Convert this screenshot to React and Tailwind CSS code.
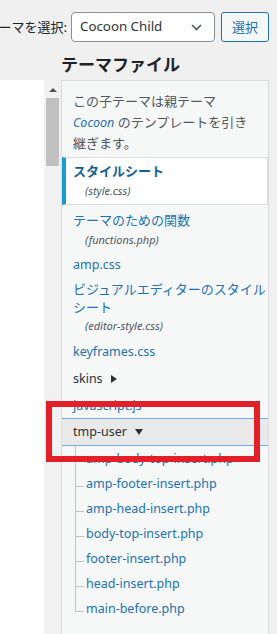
import React from "react";

const LINK = "text-[#2271b1]";

function TreeItem({ name, last }) {
  return (
    <div className="flex h-[25px]">
      <div className="w-[13px] shrink-0" />
      <div className={last ? "w-[9px] shrink-0" : "w-[9px] shrink-0 border-l border-[#c3c4c7]"}>
        <div className={last ? "h-[16px] border-l border-b border-[#c3c4c7]" : "h-[16px] border-b border-[#c3c4c7]"} />
      </div>
      <span className={"pl-[2px] text-[12.5px] leading-[25px] whitespace-nowrap " + LINK}>{name}</span>
    </div>
  );
}

export default function App() {
  const tree = [
    "amp-body-top-insert.php",
    "amp-footer-insert.php",
    "amp-head-insert.php",
    "body-top-insert.php",
    "footer-insert.php",
    "head-insert.php",
    "main-before.php",
  ];
  return (
    <div className="relative w-[277px] h-[634px] overflow-hidden bg-[#f0f0f1] text-[13px] text-[#1d2327] font-['Noto_Sans','Noto_Sans_CJK_JP',sans-serif]">
      {/* top row */}
      <div className="flex justify-end items-center pt-[12px] pr-[8px] whitespace-nowrap">
        <span className="text-[13px] leading-[30px] mr-[4px] font-['Noto_Sans_CJK_JP',sans-serif]">テーマを選択:</span>
        <div className="w-[144px] h-[30px] shrink-0 flex items-center justify-between bg-white border border-[#8c8f94] rounded-[4px] pl-[8px] pr-[12px] text-[13.3px] text-[#2c3338]">
          <span>Cocoon Child</span>
          <svg width="11" height="7" viewBox="0 0 11 7" fill="none">
            <path d="M1 1l4.5 4.5L10 1" stroke="#50575e" strokeWidth="1.6" />
          </svg>
        </div>
        <button className="ml-[6px] w-[48px] h-[30px] shrink-0 border border-[#2271b1] rounded-[3px] bg-[#f6f7f7] text-[#2271b1] text-[13px] font-['Noto_Sans_CJK_JP',sans-serif]">
          選択
        </button>
      </div>

      {/* heading */}
      <h2 className="mt-[11px] pl-[61px] h-[22px] leading-[22px] text-[17px] font-bold text-[#1d2327] font-['Noto_Sans_CJK_JP',sans-serif]">
        テーマファイル
      </h2>

      {/* main */}
      <div className="mt-[5px] flex h-[560px]">
        <div className="w-[61px] shrink-0 bg-white flex justify-end">
          <div className="w-[17px] bg-[#f1f1f1] flex flex-col items-center">
            <div className="h-[18px] w-full flex items-center justify-center pt-[1px]">
              <div className="w-0 h-0 border-l-[4px] border-r-[4px] border-b-[4px] border-l-transparent border-r-transparent border-b-[#505050]" />
            </div>
            <div className="w-[13px] h-[68px] bg-[#c1c1c1]" />
          </div>
        </div>

        <div className="w-[208px] shrink-0 border border-[#dcdcde] bg-[#f6f7f7]">
          <p className="pt-[10px] px-[11px] leading-[21px] text-[#50575e] whitespace-nowrap">
            この子テーマは親テーマ
            <br />
            <i className={"text-[12.5px] " + LINK}>Cocoon</i> のテンプレートを引き
            <br />
            継ぎます。
          </p>

          {/* selected */}
          <div className="mt-[3px] bg-white border-y border-r border-[#dcdcde] border-l-[4px] border-l-[#1a9ccd] pt-[3px] pb-[4px] pl-[7px]">
            <div className="h-[20px] leading-[20px] font-bold text-[#135e96] whitespace-nowrap">スタイルシート</div>
            <div className="h-[19px] leading-[19px] pl-[12px] italic text-[11px] text-[#50575e]">(style.css)</div>
          </div>

          <div className="pl-[11px]">
            <div className={"mt-[5px] h-[20px] leading-[20px] whitespace-nowrap " + LINK}>テーマのための関数</div>
            <div className="h-[20px] leading-[20px] pl-[12px] italic text-[11px] text-[#50575e]">(functions.php)</div>
            <div className={"mt-[5px] h-[20px] leading-[20px] text-[12.5px] " + LINK}>amp.css</div>
            <div className={"mt-[5px] h-[18px] leading-[18px] whitespace-nowrap " + LINK}>ビジュアルエディターのスタイル</div>
            <div className={"h-[18px] leading-[18px] " + LINK}>シート</div>
            <div className="h-[20px] leading-[20px] pl-[12px] italic text-[11px] text-[#50575e]">(editor-style.css)</div>
            <div className={"mt-[6px] h-[20px] leading-[20px] text-[12.5px] " + LINK}>keyframes.css</div>
            <div className="mt-[7px] h-[20px] leading-[20px] text-[12.5px] text-[#2c3338] flex items-center">
              skins
              <span className="ml-[8px] w-0 h-0 border-t-[4px] border-b-[4px] border-l-[6px] border-t-transparent border-b-transparent border-l-[#2c3338]" />
            </div>
            <div className={"mt-[7px] h-[20px] leading-[20px] text-[12.5px] " + LINK}>javascript.js</div>
          </div>

          <div className="mt-[2px] h-[28px] border-y border-[#72aee6] bg-[#e9e9e9] pl-[11px] flex items-center text-[12.5px] text-[#2c3338]">
            tmp-user
            <span className="ml-[8px] w-0 h-0 border-l-[4px] border-r-[4px] border-t-[6px] border-l-transparent border-r-transparent border-t-[#2c3338]" />
          </div>

          <div>
            {tree.map((n, i) => (
              <TreeItem key={n} name={n} last={i === tree.length - 1} />
            ))}
          </div>
        </div>
      </div>

      {/* red annotation box */}
      <div className="absolute left-[46px] top-[401px] w-[214px] h-[61px] border-[6px] border-[#e3202a]" />
    </div>
  );
}
